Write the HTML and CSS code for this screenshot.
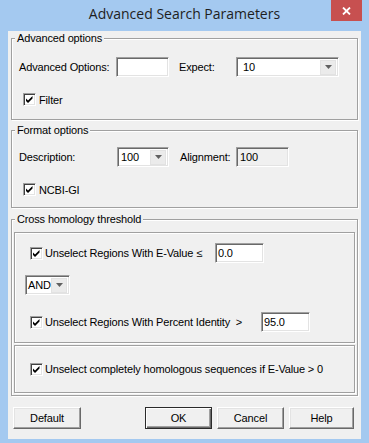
FILE: index.html
```html
<!DOCTYPE html>
<html>
<head>
    <title>Advanced Search Parameters</title>
    <link rel="stylesheet" href="styles.css">
</head>
<body>
<div class="window">
    <div class="titlebar">
        <span class="title">Advanced Search Parameters</span>
        <span class="close-btn">
            <svg width="9" height="8" viewBox="0 0 9 8"><path d="M1 0.5 L8 7.5 M8 0.5 L1 7.5" stroke="#fff" stroke-width="1.8"/></svg>
        </span>
    </div>

    <div class="client">
        <!-- Advanced options -->
        <fieldset class="group group-advanced">
            <legend>Advanced options</legend>
            <div class="row field-row first-row">
                <span class="lbl lbl-adv">Advanced Options:</span>
                <div class="edit edit-adv"></div>
                <span class="lbl lbl-expect">Expect:</span>
                <div class="edit combo combo-expect">
                    <span class="combo-value">10</span>
                    <span class="combo-btn"><svg width="7" height="4" viewBox="0 0 7 4"><path d="M0 0 H7 L3.5 4 Z" fill="#606060"/></svg></span>
                </div>
            </div>
            <div class="row check-row">
                <span class="checkbox"><svg width="9" height="9" viewBox="0 0 9 9"><path d="M1 3.5 L3 5.5 L7.5 1 V3.5 L3 8 L1 6 Z" fill="#000"/></svg></span>
                <span class="check-text">Filter</span>
            </div>
        </fieldset>

        <!-- Format options -->
        <fieldset class="group group-format">
            <legend>Format options</legend>
            <div class="row field-row second-row">
                <span class="lbl lbl-desc">Description:</span>
                <div class="edit combo combo-desc">
                    <span class="combo-value">100</span>
                    <span class="combo-btn"><svg width="7" height="4" viewBox="0 0 7 4"><path d="M0 0 H7 L3.5 4 Z" fill="#606060"/></svg></span>
                </div>
                <span class="lbl lbl-align">Alignment:</span>
                <div class="edit readonly edit-align">100</div>
            </div>
            <div class="row check-row">
                <span class="checkbox"><svg width="9" height="9" viewBox="0 0 9 9"><path d="M1 3.5 L3 5.5 L7.5 1 V3.5 L3 8 L1 6 Z" fill="#000"/></svg></span>
                <span class="check-text">NCBI-GI</span>
            </div>
        </fieldset>

        <!-- Cross homology threshold -->
        <fieldset class="group group-cross">
            <legend>Cross homology threshold</legend>
            <div class="panel panel-regions">
                <div class="row field-row evalue-row">
                    <span class="checkbox"><svg width="9" height="9" viewBox="0 0 9 9"><path d="M1 3.5 L3 5.5 L7.5 1 V3.5 L3 8 L1 6 Z" fill="#000"/></svg></span>
                    <span class="check-text lbl-evalue">Unselect Regions With E-Value ≤</span>
                    <div class="edit edit-small">0.0</div>
                </div>
                <div class="row field-row and-row">
                    <div class="edit combo combo-and">
                        <span class="combo-value">AND</span>
                        <span class="combo-btn"><svg width="7" height="4" viewBox="0 0 7 4"><path d="M0 0 H7 L3.5 4 Z" fill="#606060"/></svg></span>
                    </div>
                </div>
                <div class="row field-row identity-row">
                    <span class="checkbox"><svg width="9" height="9" viewBox="0 0 9 9"><path d="M1 3.5 L3 5.5 L7.5 1 V3.5 L3 8 L1 6 Z" fill="#000"/></svg></span>
                    <span class="check-text lbl-identity">Unselect Regions With Percent Identity&nbsp;&nbsp;&gt;</span>
                    <div class="edit edit-small">95.0</div>
                </div>
            </div>
            <div class="panel panel-homologous">
                <div class="row">
                    <span class="checkbox"><svg width="9" height="9" viewBox="0 0 9 9"><path d="M1 3.5 L3 5.5 L7.5 1 V3.5 L3 8 L1 6 Z" fill="#000"/></svg></span>
                    <span class="check-text">Unselect completely homologous sequences if E-Value &gt; 0</span>
                </div>
            </div>
        </fieldset>

        <div class="button-row">
            <button class="btn btn-default">Default</button>
            <button class="btn btn-ok">OK</button>
            <button class="btn btn-cancel">Cancel</button>
            <button class="btn btn-help">Help</button>
        </div>
    </div>
</div>
</body>
</html>
```

FILE: styles.css
```css
body {
    margin: 0;
    background: #a4c9f0;
    font-family: "Liberation Sans", Arial, sans-serif;
    font-size: 11px;
    letter-spacing: -0.15px;
    color: #000;
}
.window {
    width: 369px;
    height: 443px;
    display: flex;
    flex-direction: column;
}
.titlebar {
    height: 31px;
    position: relative;
    display: flex;
    justify-content: center;
}
.title {
    font-family: "Open Sans", "Noto Sans", sans-serif;
    font-size: 14px;
    letter-spacing: 0;
    line-height: 20px;
    padding-top: 4px;
    color: #1e1e1e;
}
.close-btn {
    position: absolute;
    top: 0;
    right: 7px;
    width: 31px;
    height: 21px;
    background: #c75050;
    display: flex;
    align-items: center;
    justify-content: center;
}
.client {
    flex: 1;
    margin: 0 8px 4px;
    padding: 0 3px;
    background: #f0f0f0;
}

/* group boxes */
.group {
    margin: 0;
    padding: 0;
    min-width: 0;
    border: 1px solid #a0a0a0;
    box-shadow: inset 1px 1px 0 #fff, 1px 1px 0 #fff;
}
.group legend {
    margin-left: 3px;
    padding: 0 2px;
    line-height: 14px;
    background: #f0f0f0;
}
.group-format {
    margin-top: 3px;
}
.group-cross {
    margin-top: 4px;
}

.row {
    display: flex;
    align-items: center;
}
.field-row {
    height: 20px;
}
.first-row {
    margin-top: 12px;
    padding-left: 7px;
}
.second-row {
    margin-top: 10px;
    padding-left: 7px;
}
.check-row {
    height: 13px;
    margin-top: 16px;
    padding-left: 11px;
}
.group-advanced .check-row {
    margin-bottom: 13px;
}
.group-format .check-row {
    margin-bottom: 11px;
}

.lbl {
    flex: none;
}
.lbl-adv { width: 97px; }
.lbl-expect { width: 57px; margin-left: 10px; }
.lbl-desc { width: 98px; }
.lbl-align { width: 56px; margin-left: 11px; }

/* sunken edit boxes */
.edit {
    box-sizing: border-box;
    height: 20px;
    background: #fff;
    border: 1px solid;
    border-color: #a0a0a0 #fff #fff #a0a0a0;
    box-shadow: inset 1px 1px 0 #696969, inset -1px -1px 0 #e3e3e3;
    line-height: 18px;
    padding-left: 3px;
    flex: none;
}
.edit-adv { width: 53px; }
.edit-align {
    width: 53px;
}
.readonly {
    background: #f0f0f0;
}
.edit-small {
    width: 49px;
    padding-left: 2px;
}
.combo {
    display: flex;
    align-items: center;
    padding-right: 2px;
}
.combo-value {
    flex: 1;
}
.combo-btn {
    width: 16px;
    height: 15px;
    box-sizing: border-box;
    border: 1px solid #e2e2e2;
    background: #ebebeb;
    display: flex;
    align-items: center;
    justify-content: center;
}
.combo-expect {
    width: 103px;
    padding-left: 6px;
}
.combo-desc {
    width: 52px;
    padding-left: 3px;
}
.combo-and {
    width: 45px;
    padding-left: 2px;
    margin-left: 10px;
}

/* checkboxes */
.checkbox {
    box-sizing: border-box;
    width: 13px;
    height: 13px;
    flex: none;
    background: #fff;
    border: 1px solid;
    border-color: #a0a0a0 #fff #fff #a0a0a0;
    box-shadow: inset 1px 1px 0 #404040, inset -1px -1px 0 #e3e3e3;
    display: flex;
    align-items: center;
    justify-content: center;
}
.check-text {
    margin-left: 3px;
}
.lbl-evalue { width: 170px; margin-left: 2px; }
.lbl-identity { width: 216px; margin-left: 2px; }

/* inner panels */
.panel {
    margin: 0 2px;
    border: 1px solid #a0a0a0;
    box-shadow: inset 1px 1px 0 #fff, 1px 1px 0 #fff;
    box-sizing: border-box;
}
.panel-regions {
    margin-top: 6px;
    height: 111px;
    padding-left: 15px;
}
.evalue-row {
    margin-top: 10px;
}
.and-row {
    margin-top: 12px;
    margin-left: -15px;
}
.identity-row {
    margin-top: 17px;
}
.panel-homologous {
    margin-top: 2px;
    margin-bottom: 2px;
    height: 48px;
    padding-left: 15px;
    display: flex;
    align-items: center;
}
.panel-homologous .check-text {
    margin-left: 2px;
}

/* buttons */
.button-row {
    display: flex;
    margin-top: 11px;
    padding-left: 2px;
    gap: 5px;
}
.btn {
    box-sizing: border-box;
    height: 22px;
    padding: 0;
    font-family: "Liberation Sans", Arial, sans-serif;
    font-size: 11px;
    letter-spacing: -0.15px;
    color: #000;
    background: #f0f0f0;
    border: 1px solid;
    border-color: #fff #696969 #696969 #fff;
    box-shadow: inset -1px -1px 0 #a0a0a0, inset 1px 1px 0 #e3e3e3;
}
.btn-default { width: 68px; margin-right: 59px; }
.btn-ok {
    width: 67px;
    border-color: #2b2b2b;
    box-shadow: inset 1px 1px 0 #fff, inset -1px -1px 0 #696969, inset -2px -2px 0 #a0a0a0;
}
.btn-cancel { width: 67px; }
.btn-help { width: 65px; }
```
